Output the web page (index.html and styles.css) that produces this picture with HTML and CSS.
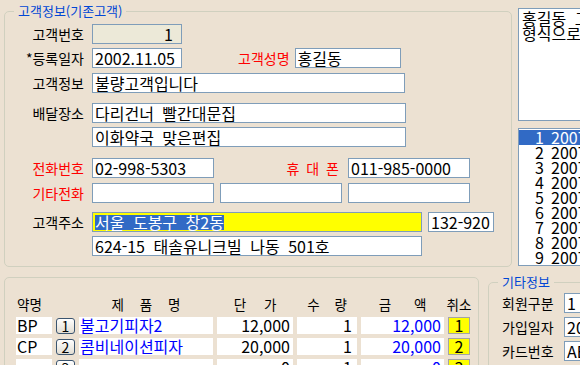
FILE: index.html
```html
<!DOCTYPE html>
<html lang="ko">
<head>
    <meta charset="UTF-8">
    <title>고객정보</title>
    <link rel="stylesheet" href="styles.css">
</head>
<body>
    <div class="upper">
        <fieldset class="grp cust">
            <legend>고객정보(기존고객)</legend>

            <div class="row" style="margin-top:6px">
                <span class="lbl">고객번호</span>
                <div class="fld off num w90">1</div>
            </div>
            <div class="row" style="margin-top:4px">
                <span class="lbl">*등록일자</span>
                <div class="fld w90">2002.11.05</div>
                <span class="lbl-name red">고객성명</span>
                <div class="fld w106">홍길동</div>
            </div>
            <div class="row" style="margin-top:5px">
                <span class="lbl">고객정보</span>
                <div class="fld w313">불량고객입니다</div>
            </div>
            <div class="row" style="margin-top:10px">
                <span class="lbl">배달장소</span>
                <div class="fld w314">다리건너 빨간대문집</div>
            </div>
            <div class="row" style="margin-top:4px">
                <span class="lbl"></span>
                <div class="fld w314">이화약국 맞은편집</div>
            </div>
            <div class="row" style="margin-top:11px">
                <span class="lbl red">전화번호</span>
                <div class="fld w122">02-998-5303</div>
                <span class="lbl-hp red">휴 대 폰</span>
                <div class="fld w122">011-985-0000</div>
            </div>
            <div class="row" style="margin-top:5px">
                <span class="lbl red">기타전화</span>
                <div class="fld w122"></div>
                <div class="fld w122 gap"></div>
                <div class="fld w122 gap"></div>
            </div>
            <div class="row" style="margin-top:9px">
                <span class="lbl">고객주소</span>
                <div class="fld w330 hl"><span class="sel">서울 도봉구 창2동</span></div>
                <div class="fld w66 gap">132-920</div>
            </div>
            <div class="row" style="margin-top:4px">
                <span class="lbl"></span>
                <div class="fld w330">624-15 태솔유니크빌 나동 501호</div>
            </div>
        </fieldset>

        <div class="side">
            <div class="memo">
                홍길동 고객님은<br>
                형식으로 주문
            </div>
            <div class="list">
                <div class="item on"><span class="no">1</span>2007-11-05</div>
                <div class="item"><span class="no">2</span>2007-10-28</div>
                <div class="item"><span class="no">3</span>2007-10-14</div>
                <div class="item"><span class="no">4</span>2007-09-30</div>
                <div class="item"><span class="no">5</span>2007-09-02</div>
                <div class="item"><span class="no">6</span>2007-08-19</div>
                <div class="item"><span class="no">7</span>2007-07-22</div>
                <div class="item"><span class="no">8</span>2007-06-10</div>
                <div class="item"><span class="no">9</span>2007-05-27</div>
            </div>
        </div>
    </div>

    <div class="lower">
        <div class="grp order">
            <div class="grid">
                <span class="hd left">약명</span>
                <span></span>
                <span class="hd h-name">제 품 명</span>
                <span class="hd h-price">단 가</span>
                <span class="hd h-qty">수 량</span>
                <span class="hd h-amt">금 액</span>
                <span class="hd">취소</span>

                <div class="cell">BP</div>
                <div class="btn">1</div>
                <div class="cell blue">불고기피자2</div>
                <div class="cell r">12,000</div>
                <div class="cell r qty">1</div>
                <div class="cell r blue">12,000</div>
                <div class="cancel">1</div>

                <div class="cell">CP</div>
                <div class="btn">2</div>
                <div class="cell blue">콤비네이션피자</div>
                <div class="cell r">20,000</div>
                <div class="cell r qty">1</div>
                <div class="cell r blue">20,000</div>
                <div class="cancel">2</div>

                <div class="cell"></div>
                <div class="btn">3</div>
                <div class="cell blue"></div>
                <div class="cell r">0</div>
                <div class="cell r qty">1</div>
                <div class="cell r blue">0</div>
                <div class="cancel">3</div>
            </div>
        </div>

        <fieldset class="grp extra">
            <legend>기타정보</legend>
            <div class="erow">
                <span class="elbl">회원구분</span>
                <div class="fld wide">1</div>
            </div>
            <div class="erow">
                <span class="elbl">가입일자</span>
                <div class="fld wide">2002.11.05</div>
            </div>
            <div class="erow">
                <span class="elbl">카드번호</span>
                <div class="fld wide">AE</div>
            </div>
        </fieldset>
    </div>
</body>
</html>
```

FILE: styles.css
```css
body {
    margin: 0;
    width: 580px;
    height: 365px;
    overflow: hidden;
    background: #ece1d2;
    font-family: "Noto Sans CJK KR", "Noto Sans", sans-serif;
    color: #000;
}
.upper {
    display: flex;
    align-items: flex-start;
    box-sizing: border-box;
    height: 271px;
    padding: 4px 0 0 4px;
}
.grp {
    box-sizing: border-box;
    border: 1px solid #d0d0bf;
    border-radius: 5px;
    margin: 0;
    padding: 0;
    min-width: 0;
}
.grp legend {
    color: #0046d5;
    font-size: 13px;
    line-height: 14px;
    padding: 0 4px;
    margin-left: 9px;
}
.cust {
    width: 508px;
    height: 263px;
    flex: none;
}
.row {
    display: flex;
    align-items: center;
    height: 20px;
}
.lbl {
    width: 79px;
    margin-right: 8px;
    text-align: right;
    font-size: 14px;
    line-height: 20px;
    white-space: nowrap;
    flex: none;
}
.lbl-name {
    margin-left: 56px;
    margin-right: 5px;
    font-size: 14px;
    line-height: 20px;
}
.lbl-hp {
    box-sizing: border-box;
    width: 128px;
    padding-right: 3px;
    margin-right: 6px;
    text-align: right;
    font-size: 14px;
    line-height: 20px;
    word-spacing: 3px;
}
.red {
    color: #ff0000;
}
.fld {
    box-sizing: border-box;
    height: 20px;
    border: 1px solid #7f9db9;
    background: #fff;
    font-size: 16px;
    line-height: 18px;
    padding: 0 2px;
    white-space: nowrap;
    word-spacing: 4px;
    flex: none;
}
.fld.off {
    background: #ece9d8;
}
.fld.num {
    text-align: right;
    padding-right: 8px;
}
.fld.gap {
    margin-left: 6px;
}
.w90 { width: 90px; }
.w106 { width: 106px; }
.w122 { width: 122px; }
.w313 { width: 313px; }
.w314 { width: 314px; }
.w330 { width: 330px; }
.w66 { width: 66px; }
.fld.hl {
    background: #ffff00;
    padding: 0 2px;
}
.sel {
    display: inline-block;
    margin-top: 2px;
    vertical-align: top;
    background: #316ac5;
    color: #fff;
    line-height: 15px;
}

/* right column */
.side {
    margin: 4px 0 0 6px;
    width: 110px;
    flex: none;
}
.memo {
    box-sizing: border-box;
    height: 113px;
    border: 1px solid #7f9db9;
    background: #fff;
    padding: 2px 0 0 3px;
    font-size: 16px;
    line-height: 15px;
    white-space: nowrap;
    overflow: hidden;
    word-spacing: 4px;
}
.list {
    box-sizing: border-box;
    margin-top: 7px;
    height: 138px;
    border: 1px solid #7f9db9;
    background: #fff;
    padding-top: 1px;
    overflow: hidden;
}
.item {
    display: flex;
    font-size: 16px;
    line-height: 15px;
    height: 15px;
    white-space: nowrap;
}
.item.on {
    background: #316ac5;
    color: #fff;
}
.no {
    width: 25px;
    margin-right: 7px;
    text-align: right;
    flex: none;
}

/* bottom */
.lower {
    display: flex;
    align-items: flex-start;
    padding-left: 4px;
}
.order {
    width: 475px;
    height: 110px;
    margin-top: 6px;
    padding: 16px 0 0 11px;
    flex: none;
}
.grid {
    display: grid;
    grid-template-columns: 36px 19px 134px 76px 60px 83px 22px;
    grid-template-rows: 19px 17px 17px 17px;
    column-gap: 4px;
    row-gap: 4px;
}
.hd {
    display: flex;
    justify-content: center;
    align-items: center;
    font-size: 13.5px;
    white-space: nowrap;
}
.hd.left {
    justify-content: flex-start;
    padding-left: 1px;
}
.h-name { word-spacing: 12px; }
.h-price { word-spacing: 14px; }
.h-qty { word-spacing: 11px; }
.h-amt { word-spacing: 19px; }
.cell {
    background: #fff;
    font-size: 16px;
    line-height: 17px;
    padding: 0 3px 0 1px;
    white-space: nowrap;
}
.cell.r {
    text-align: right;
}
.cell.qty {
    padding-right: 5px;
}
.blue {
    color: #0000ff;
}
.btn {
    box-sizing: border-box;
    height: 16px;
    margin-top: 1px;
    border: 1px solid #3b5570;
    border-radius: 3px;
    background: linear-gradient(#ffffff, #e2ddd2);
    font-size: 14px;
    line-height: 14px;
    text-align: center;
}
.cancel {
    box-sizing: border-box;
    background: #ffff00;
    border: 1px solid #a4a4a4;
    font-size: 16px;
    line-height: 15px;
    text-align: center;
}
.extra {
    width: 120px;
    height: 110px;
    margin: 4px 0 0 9px;
    padding-top: 4px;
    flex: none;
}
.erow {
    display: flex;
    align-items: center;
    height: 20px;
    margin-bottom: 4px;
    padding-left: 13px;
}
.elbl {
    width: 56px;
    margin-right: 6px;
    font-size: 14px;
    white-space: nowrap;
    flex: none;
}
.fld.wide {
    width: 60px;
}
```
